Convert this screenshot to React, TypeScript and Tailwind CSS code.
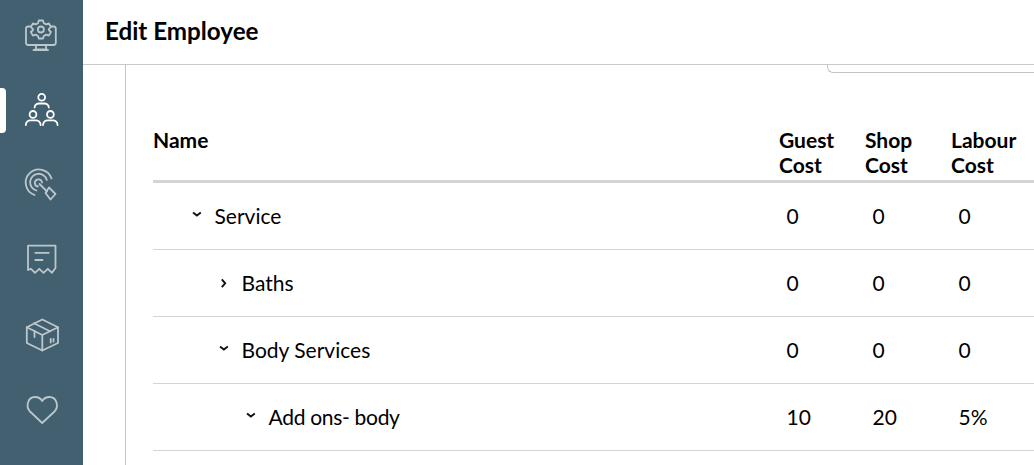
const rows = [
  { name: "Service", indent: "pl-[38px]", open: true, vals: ["0", "0", "0"], word: "" },
  { name: "Baths", indent: "pl-[65px]", open: false, vals: ["0", "0", "0"], word: "" },
  { name: "Body Services", indent: "pl-[65px]", open: true, vals: ["0", "0", "0"], word: "" },
  { name: "Add ons- body", indent: "pl-[92px]", open: true, vals: ["10", "20", "5%"], word: "tracking-[-0.3px]" },
];

function NavIcon({ top, height, white, children }: { top: number; height: number; white?: boolean; children: React.ReactNode }) {
  return (
    <svg
      width={42}
      height={height}
      viewBox={`20 ${top} 42 ${height}`}
      fill="none"
      stroke={white ? "#ffffff" : "#bcc7cc"}
      strokeWidth={1.8}
      strokeLinecap="round"
      strokeLinejoin="round"
    >
      {children}
    </svg>
  );
}

function Chevron({ open }: { open: boolean }) {
  return (
    <svg width={11} height={11} viewBox="0 0 11 11" fill="none" stroke="#111" strokeWidth={1.9} className="shrink-0">
      {open ? <path d="M2 2.6 5.9 5.6 9.8 2.6" /> : <path d="M3.8 2.4 7.2 6.3 3.8 10.2" />}
    </svg>
  );
}

export default function App() {
  return (
    <div className="flex h-[465px] w-[1034px] overflow-hidden bg-white font-['Lato','Open_Sans',sans-serif] text-black">
      <aside className="relative flex w-[83px] shrink-0 flex-col bg-[#42606f] pl-[20px]">
        <div className="absolute left-0 top-[88px] h-[45px] w-[6px] rounded-r-[4px] bg-white" />
        <div className="flex h-[70px] items-center">
          <NavIcon top={17} height={36}>
            <path d="M30.5 26.5H28.2Q26 26.5 26 28.7V42.8Q26 45 28.2 45H53.6Q55.8 45 55.8 42.8V28.7Q55.8 26.5 53.6 26.5H51.2" />
            <path d="M36.5 45 35.5 49.5H46.5L45.5 45M33.5 50H48" />
            <path d="M38.8 20.5H43L43.8 23.2 46.2 24.4 48.9 23.4 50.9 27 48.8 29.2V30L50.9 32 48.9 35.6 46.2 34.6 43.8 36 43 38.5H38.8L38 36 35.6 34.6 32.9 35.6 30.9 32 33 30V29.2L30.9 27 32.9 23.4 35.6 24.4 38 23.2Z" />
            <circle cx="40.9" cy="29.5" r="3" />
          </NavIcon>
        </div>
        <div className="flex h-[80px] items-center">
          <NavIcon top={92} height={36} white>
            <circle cx="41.7" cy="97.3" r="3.4" />
            <path d="M34.6 107.5C34.8 105 37 103.5 39 103.5H44.4C46.4 103.5 48.6 105 48.8 107.5" />
            <circle cx="33" cy="114.4" r="3.4" />
            <path d="M25.8 125C26 122 28.4 120.3 30.5 120.3H35.9C38 120.3 40.4 122 40.6 125" />
            <circle cx="50.4" cy="114.4" r="3.4" />
            <path d="M43 125C43.2 122 45.6 120.3 47.7 120.3H52.9C55 120.3 57.4 122 57.6 125" />
          </NavIcon>
        </div>
        <div className="flex h-[70px] items-center">
          <NavIcon top={167} height={36}>
            <path d="M51.5 178.5A13.2 13.2 0 1 0 34.5 195" />
            <path d="M46.8 180A8.5 8.5 0 1 0 36.5 190.5" />
            <path d="M42 182.5A3.6 3.6 0 1 0 38 186.5" />
            <path d="M39.5 184 47 191.5" />
            <path d="M49 187.5 55.5 194 50.5 199.5 45.5 193 49 187.5Z" />
          </NavIcon>
        </div>
        <div className="flex h-[80px] items-center">
          <NavIcon top={242} height={36}>
            <path d="M28 245.7H55.5V268L52 272.8 47.8 268.8 43.5 272.8 39.3 268.8 35 272.8 31 268.8 28 270Z" />
            <path d="M35.3 252.8H48.8M35.3 260H42.5" />
          </NavIcon>
        </div>
        <div className="flex h-[70px] items-center">
          <NavIcon top={317} height={36}>
            <path d="M42.3 319.5 58 327.3V343L42.3 350.5 26.8 343V327.3Z" />
            <path d="M26.8 327.3 42.3 335 58 327.3M42.3 335V350.5" />
            <path d="M34 323.3 50 331.3M34.5 331V337" />
            <path d="M50.7 339V342.5M53.5 339V341.5" />
          </NavIcon>
        </div>
        <div className="flex h-[80px] items-center">
          <NavIcon top={392} height={36}>
            <path d="M42.2 423 30 411.5C25.5 407 27.5 397 35 397 38.5 397 41 399 42.2 401 43.4 399 46 397 49.5 397 57 397 59 407 54.5 411.5Z" />
          </NavIcon>
        </div>
      </aside>

      <main className="flex min-w-0 flex-1 flex-col">
        <header className="flex h-[65px] shrink-0 items-center border-b border-[#c9c9c9] pb-[2px] pl-[22px]">
          <h1 className="text-[24.2px] leading-[30px] font-bold">Edit Employee</h1>
        </header>

        <div className="flex min-h-0 flex-1 pl-[42px]">
          <div className="w-px shrink-0 bg-[#c4c4c4]" />
          <div className="min-w-0 flex-1 pl-[27px]">
            <div className="flex h-[9px] justify-end">
              <div className="h-[8px] w-[207px] rounded-bl-[6px] border-b border-l border-[#c4c4c4]" />
            </div>
            <div className="w-[900px] text-[21px]">
              <div className="mt-[47px] grid h-[62px] grid-cols-[626px_86px_86px_86px] border-b-[3px] border-[#d4d4d4] pt-[6px] leading-[25px] font-bold">
                <div>Name</div>
                <div>Guest<br />Cost</div>
                <div>Shop<br />Cost</div>
                <div>Labour<br />Cost</div>
              </div>
              {rows.map((r) => (
                <div key={r.name} className="grid h-[67px] grid-cols-[626px_86px_86px_86px] items-center border-b border-[#d4d4d4] pb-[2px] leading-[25px]">
                  <div className={`flex items-center gap-[12.5px] ${r.indent}`}>
                    <Chevron open={r.open} />
                    <span className={r.word}>{r.name}</span>
                  </div>
                  {r.vals.map((v, i) => (
                    <div key={i} className="pl-[7.5px]">{v}</div>
                  ))}
                </div>
              ))}
            </div>
          </div>
        </div>
      </main>
    </div>
  );
}
